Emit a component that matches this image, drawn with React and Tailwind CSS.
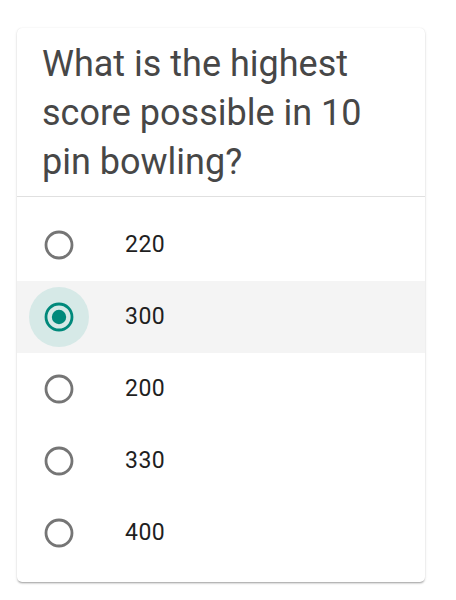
import React from "react";

const options = ["220", "300", "200", "330", "400"];
const selected = "300";

function Radio({ checked }) {
  return (
    <div className="flex h-[60px] w-[60px] items-center justify-center rounded-full" style={checked ? { backgroundColor: "#d6e9e7" } : undefined}>
      <svg width="30" height="30" viewBox="0 0 30 30">
        <circle cx="15" cy="15" r="13" fill="none" stroke={checked ? "#00897b" : "#757575"} strokeWidth="2.8" />
        {checked && <circle cx="15" cy="15" r="7.2" fill="#00897b" />}
      </svg>
    </div>
  );
}

export default function App() {
  return (
    <div className="min-h-[600px] bg-white pt-[28px] pl-[17px]" style={{ fontFamily: "Roboto, 'Liberation Sans', sans-serif" }}>
      <div className="w-[408px] rounded-[5px] bg-white shadow-[0_2px_2px_-1px_rgba(0,0,0,0.3),0_1px_3px_0_rgba(0,0,0,0.12),0_0_1px_0_rgba(0,0,0,0.1)]">
        <div className="border-b border-[#e0e0e0] px-[25px] pt-[12px] pb-[9px] text-[36px] leading-[49px] text-[#474747]">
          What is the highest score possible in 10 pin bowling?
        </div>
        <div className="pt-[12px] pb-[13px]">
          {options.map((o) => (
            <div key={o} className={"flex h-[72px] items-center pl-[12px] " + (o === selected ? "bg-[#f4f4f4]" : "")}>
              <Radio checked={o === selected} />
              <span className="ml-[36px] text-[23px] tracking-[0.5px] text-[#1f1f1f]">{o}</span>
            </div>
          ))}
        </div>
      </div>
    </div>
  );
}
